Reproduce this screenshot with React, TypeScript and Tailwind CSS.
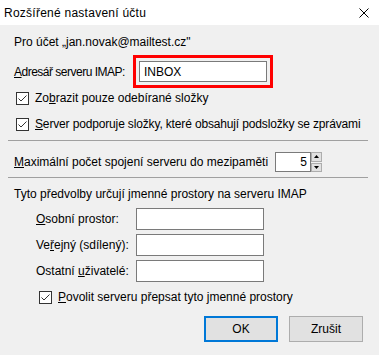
import { ReactNode } from "react";

function Check({ label, tight }: { label: ReactNode; tight?: boolean }) {
  return (
    <div className="flex h-[16px] items-center">
      <span className="flex h-[13px] w-[13px] items-center justify-center border border-[#333333] bg-white">
        <svg width="11" height="11" viewBox="0 0 11 11">
          <polyline points="1.5,5.5 4,8 9.5,2.5" fill="none" stroke="#333333" strokeWidth="1" />
        </svg>
      </span>
      <span className={tight ? "ml-[6px] whitespace-nowrap tracking-[-0.15px]" : "ml-[6px] whitespace-nowrap"}>
        {label}
      </span>
    </div>
  );
}

function Field({ label }: { label: ReactNode }) {
  return (
    <div className="flex h-[22px] items-center">
      <span className="w-[100px] whitespace-nowrap">{label}</span>
      <input className="h-[22px] w-[128px] border border-[#7a7a7a] bg-white px-[4px] outline-none" />
    </div>
  );
}

export default function App() {
  return (
    <div
      className="flex h-[355px] w-[379px] flex-col overflow-hidden bg-[#f0f0f0] text-[12px] leading-[16px] text-black"
      style={{ fontFamily: '"Liberation Sans", Arial, sans-serif' }}
    >
      {/* title bar */}
      <div className="flex h-[25px] shrink-0 items-center justify-between bg-white pl-[4px] pr-[10px]">
        <span className="tracking-[0.25px]">Rozšířené nastavení účtu</span>
        <svg width="10" height="10" viewBox="0 0 10 10">
          <path d="M0.5 0.5 L9.5 9.5 M9.5 0.5 L0.5 9.5" stroke="#000" strokeWidth="1" />
        </svg>
      </div>

      <div className="flex flex-col px-[14px]">
        <div className="mt-[9px] h-[16px] whitespace-nowrap">Pro účet „jan.novak@mailtest.cz"</div>

        <div className="mt-[5px] flex items-center">
          <span className="w-[119px] whitespace-nowrap tracking-[-0.5px]">
            <u>A</u>dresář serveru IMAP:
          </span>
          <div className="border-[3px] border-[#ff0000] p-[3px]">
            <input
              defaultValue="INBOX"
              className="block h-[21px] w-[128px] border border-[#7a7a7a] bg-white px-[4px] outline-none"
            />
          </div>
        </div>

        <div className="mt-[2px] ml-[2px]">
          <Check
            label={
              <>
                Zo<u>b</u>razit pouze odebírané složky
              </>
            }
          />
        </div>
        <div className="mt-[10px] ml-[2px]">
          <Check
            tight
            label={
              <>
                <u>S</u>erver podporuje složky, které obsahují podsložky se zprávami
              </>
            }
          />
        </div>

        <div className="mt-[8px] ml-[-6px] h-px w-[360px] bg-[#a0a0a0]" />

        <div className="mt-[11px] flex h-[20px] items-center">
          <span className="w-[261px] whitespace-nowrap">
            <u>M</u>aximální počet spojení serveru do mezipaměti
          </span>
          <input
            defaultValue="5"
            className="h-[20px] w-[36px] border border-[#7a7a7a] bg-white pr-[3px] text-right outline-none"
          />
          <div className="flex h-[20px] w-[11px] flex-col gap-px">
            <span className="flex flex-1 items-center justify-center border border-[#adadad] bg-[#e1e1e1]">
              <svg width="5" height="3" viewBox="0 0 5 3">
                <path d="M2.5 0 L5 3 L0 3 Z" fill="#000" />
              </svg>
            </span>
            <span className="flex flex-1 items-center justify-center border border-[#adadad] bg-[#e1e1e1]">
              <svg width="5" height="3" viewBox="0 0 5 3">
                <path d="M0 0 L5 0 L2.5 3 Z" fill="#000" />
              </svg>
            </span>
          </div>
        </div>

        <div className="mt-[5px] ml-[-6px] h-px w-[360px] bg-[#a0a0a0]" />

        <div className="mt-[8px] h-[16px] whitespace-nowrap">Tyto předvolby určují jmenné prostory na serveru IMAP</div>

        <div className="mt-[6px] flex flex-col gap-[4px] pl-[22px]">
          <Field
            label={
              <>
                <u>O</u>sobní prostor:
              </>
            }
          />
          <Field
            label={
              <>
                Ve<u>ř</u>ejný (sdílený):
              </>
            }
          />
          <Field
            label={
              <>
                Ostatní <u>u</u>živatelé:
              </>
            }
          />
        </div>

        <div className="mt-[7px] ml-[25px]">
          <Check
            label={
              <>
                <u>P</u>ovolit serveru přepsat tyto jmenné prostory
              </>
            }
          />
        </div>

        <div className="mt-[11px] mr-[2px] flex justify-end gap-[11px]">
          <button className="h-[26px] w-[74px] border-2 border-[#0078d7] bg-[#e1e1e1]">OK</button>
          <button className="h-[26px] w-[74px] border border-[#adadad] bg-[#e1e1e1]">Zrušit</button>
        </div>
      </div>
    </div>
  );
}
